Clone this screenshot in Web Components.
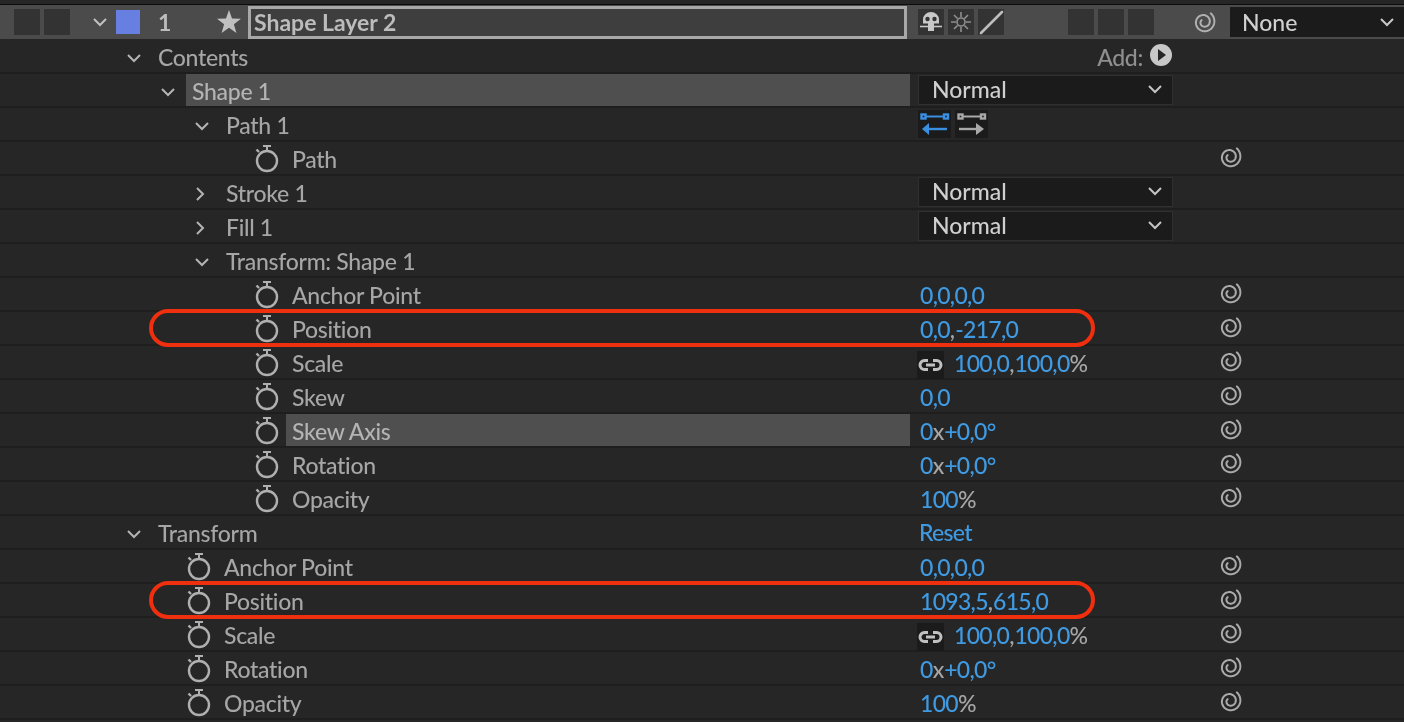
<!DOCTYPE html>
<html>
<head>
<meta charset="utf-8">
<title>Shape Layer 2</title>
<style>
    html, body { margin: 0; height: 722px; overflow: hidden; background: #262626; }
    body { font-family: Lato, "Noto Sans", "Liberation Sans", sans-serif; }
    ae-num { color: #3f9ae2; letter-spacing: -0.7px; }
</style>
</head>
<body>
<ae-timeline>
    <ae-layer-header number="1" name="Shape Layer 2" mode="None"></ae-layer-header>
    <ae-row level="0" icon="twist">Contents
        <ae-add slot="value"></ae-add>
    </ae-row>
    <ae-row level="1" icon="twist" selected>Shape 1
        <ae-select slot="value">Normal</ae-select>
    </ae-row>
    <ae-row level="2" icon="twist">Path 1
        <ae-path-dir slot="value"></ae-path-dir>
    </ae-row>
    <ae-row level="2" icon="watch" spiral>Path</ae-row>
    <ae-row level="2" icon="closed">Stroke 1
        <ae-select slot="value">Normal</ae-select>
    </ae-row>
    <ae-row level="2" icon="closed">Fill 1
        <ae-select slot="value">Normal</ae-select>
    </ae-row>
    <ae-row level="2" icon="twist">Transform: Shape 1</ae-row>
    <ae-row level="2" icon="watch" spiral>Anchor Point
        <span slot="value"><ae-num>0,0,0,0</ae-num></span>
    </ae-row>
    <ae-row level="2" icon="watch" spiral>Position
        <span slot="value"><ae-num>0,0</ae-num>,<ae-num>-217,0</ae-num></span>
    </ae-row>
    <ae-row level="2" icon="watch" spiral>Scale
        <span slot="value"><ae-link></ae-link><ae-num>100,0</ae-num>,<ae-num>100,0</ae-num>%</span>
    </ae-row>
    <ae-row level="2" icon="watch" spiral>Skew
        <span slot="value"><ae-num>0,0</ae-num></span>
    </ae-row>
    <ae-row level="2" icon="watch" spiral selected>Skew Axis
        <span slot="value"><ae-num>0</ae-num>x<ae-num>+0,0°</ae-num></span>
    </ae-row>
    <ae-row level="2" icon="watch" spiral>Rotation
        <span slot="value"><ae-num>0</ae-num>x<ae-num>+0,0°</ae-num></span>
    </ae-row>
    <ae-row level="2" icon="watch" spiral>Opacity
        <span slot="value"><ae-num>100</ae-num>%</span>
    </ae-row>
    <ae-row level="0" icon="twist">Transform
        <span slot="value" style="display:block;margin:-1px 0 0 -1px"><ae-num>Reset</ae-num></span>
    </ae-row>
    <ae-row level="0" icon="watch" spiral>Anchor Point
        <span slot="value"><ae-num>0,0,0,0</ae-num></span>
    </ae-row>
    <ae-row level="0" icon="watch" spiral>Position
        <span slot="value"><ae-num>1093,5</ae-num>,<ae-num>615,0</ae-num></span>
    </ae-row>
    <ae-row level="0" icon="watch" spiral>Scale
        <span slot="value"><ae-link></ae-link><ae-num>100,0</ae-num>,<ae-num>100,0</ae-num>%</span>
    </ae-row>
    <ae-row level="0" icon="watch" spiral>Rotation
        <span slot="value"><ae-num>0</ae-num>x<ae-num>+0,0°</ae-num></span>
    </ae-row>
    <ae-row level="0" icon="watch" spiral>Opacity
        <span slot="value"><ae-num>100</ae-num>%</span>
    </ae-row>
    <ae-oval style="top: 309px"></ae-oval>
    <ae-oval style="top: 581px"></ae-oval>
</ae-timeline>

<script>
const chevron = (color, open = true) => open
    ? `<svg width="16" height="10" viewBox="0 0 16 10"><path d="M2 2l6 6 6-6" fill="none" stroke="${color}" stroke-width="2"/></svg>`
    : `<svg width="10" height="16" viewBox="0 0 10 16" style="margin-left:-5px"><path d="M2 2l6 6-6 6" fill="none" stroke="${color}" stroke-width="2"/></svg>`;

class AeTimeline extends HTMLElement {
    constructor() {
        super();
        this.attachShadow({ mode: 'open' });
        this.shadowRoot.innerHTML = `
            <style>
                :host {
                    display: flex;
                    flex-direction: column;
                    position: relative;
                    width: 1404px;
                    height: 722px;
                    overflow: hidden;
                    background: #262626;
                    color: #a6a6a6;
                    font-size: 23px;
                    font-weight: 500;
                    filter: blur(0.4px);
                }
            </style>
            <slot></slot>
        `;
    }
}

class AeSpiral extends HTMLElement {
    constructor() {
        super();
        this.attachShadow({ mode: 'open' });
        const points = [];
        for (let i = 0; i <= 80; i++) {
            const t = i / 80;
            const angle = -0.9 + t * Math.PI * 3.5;
            const radius = 11 - t * 8;
            points.push(`${(12 + radius * Math.cos(angle)).toFixed(2)},${(12 + radius * Math.sin(angle)).toFixed(2)}`);
        }
        this.shadowRoot.innerHTML = `
            <style>
                :host { display: block; width: 24px; height: 24px; }
                svg { display: block; }
            </style>
            <svg width="24" height="24" viewBox="0 0 24 24">
                <polyline points="${points.join(' ')}" fill="none" stroke="var(--spiral, #ababab)" stroke-width="2" stroke-linecap="round"/>
            </svg>
        `;
    }
}

class AeWatch extends HTMLElement {
    constructor() {
        super();
        this.attachShadow({ mode: 'open' });
        this.shadowRoot.innerHTML = `
            <style>
                :host { display: block; width: 26px; height: 30px; margin: -2px 2px 0 0; }
                svg { display: block; }
            </style>
            <svg width="26" height="30" viewBox="0 0 26 30" fill="none" stroke="#b0b0b0" stroke-width="2.400">
                <circle cx="13" cy="17" r="10"/>
                <path d="M9 2h8M13 2v5" stroke-width="2"/>
                <path d="M2.500 5.500l2.500 2.500"/>
            </svg>
        `;
    }
}

class AeRow extends HTMLElement {
    constructor() {
        super();
        this.attachShadow({ mode: 'open' });
    }

    connectedCallback() {
        const level = parseInt(this.getAttribute('level') || '0', 10);
        const icon = this.getAttribute('icon');
        const left = 116 + level * 34 + (icon === 'watch' ? 66 : 0);
        let glyph = '<ae-watch></ae-watch>';
        if (icon === 'twist') glyph = chevron('#b4b4b4');
        if (icon === 'closed') glyph = chevron('#b4b4b4', false);
        this.shadowRoot.innerHTML = `
            <style>
                :host {
                    display: flex;
                    flex: none;
                    height: 32px;
                    border-bottom: 2px solid #1e1e1e;
                }
                .name {
                    flex: 0 0 910px;
                    box-sizing: border-box;
                    display: flex;
                    padding-left: ${left}px;
                }
                .icon {
                    flex: 0 0 36px;
                    display: flex;
                    align-items: center;
                    justify-content: center;
                    padding-top: 3px;
                    box-sizing: border-box;
                }
                .label {
                    flex: 1;
                    padding: 1px 0 0 6px;
                    line-height: 32px;
                    letter-spacing: -0.3px;
                    white-space: nowrap;
                }
                :host([selected]) .label { background: #4f4f4f; color: #b4b4b4; }
                .value {
                    flex: 0 0 297px;
                    box-sizing: border-box;
                    padding: 2px 0 0 10px;
                    line-height: 30px;
                    white-space: nowrap;
                }
                .spiral { flex: 0 0 46px; display: flex; align-items: center; justify-content: center; padding-bottom: 3px; }
                ::slotted(ae-select), ::slotted(ae-path-dir) { margin-left: -2px; }
            </style>
            <div class="name">
                <div class="icon">${glyph}</div>
                <div class="label"><slot></slot></div>
            </div>
            <div class="value"><slot name="value"></slot></div>
            <div class="spiral">${this.hasAttribute('spiral') ? '<ae-spiral></ae-spiral>' : ''}</div>
        `;
    }
}

class AeSelect extends HTMLElement {
    constructor() {
        super();
        this.attachShadow({ mode: 'open' });
        this.shadowRoot.innerHTML = `
            <style>
                :host {
                    display: flex;
                    align-items: center;
                    justify-content: space-between;
                    box-sizing: border-box;
                    width: 255px;
                    height: 30px;
                    margin-top: -1px;
                    padding: 0 9px 2px 13px;
                    background: #1b1b1b;
                    border: 1px solid #303030;
                    color: #cfcfcf;
                    line-height: 26px;
                }
            </style>
            <slot></slot>
            ${chevron('#c4c4c4')}
        `;
    }
}

class AeAdd extends HTMLElement {
    constructor() {
        super();
        this.attachShadow({ mode: 'open' });
        this.shadowRoot.innerHTML = `
            <style>
                :host {
                    display: flex;
                    justify-content: flex-end;
                    align-items: center;
                    gap: 7px;
                    width: 252px;
                    color: #8f8f8f;
                    letter-spacing: -0.3px;
                }
                svg { display: block; margin-top: -4px; }
            </style>
            <span>Add:</span>
            <svg width="22" height="22" viewBox="0 0 22 22">
                <circle cx="11" cy="11" r="11" fill="#c8c8c8"/>
                <path d="M8 5l8 6-8 6z" fill="#262626"/>
            </svg>
        `;
    }
}

class AePathDir extends HTMLElement {
    constructor() {
        super();
        this.attachShadow({ mode: 'open' });
        const button = (color, dir) => `
            <svg width="33" height="28" viewBox="0 0 33 28" style="background:#1b1b1b">
                <g fill="none" stroke="${color}">
                    <rect x="3.500" y="4.500" width="4" height="4" stroke-width="2.400"/>
                    <rect x="26" y="4.500" width="4" height="4" stroke-width="2.400"/>
                    <path d="M7.500 6.500H26" stroke-width="2"/>
                    <path d="${dir === 'left' ? 'M10 19h19' : 'M4 19h18'}" stroke-width="2.400"/>
                </g>
                <path d="${dir === 'left' ? 'M4 19l7-6v12z' : 'M29 19l-8-6v12z'}" fill="${color}"/>
            </svg>`;
        this.shadowRoot.innerHTML = `
            <style>
                :host { display: flex; gap: 4px; }
                svg { display: block; }
            </style>
            ${button('#3a8fe0', 'left')}
            ${button('#a8a8a8', 'right')}
        `;
    }
}

class AeLink extends HTMLElement {
    constructor() {
        super();
        this.attachShadow({ mode: 'open' });
        this.shadowRoot.innerHTML = `
            <style>
                :host {
                    display: inline-flex;
                    align-items: center;
                    justify-content: center;
                    width: 27px;
                    height: 28px;
                    margin: -2px 10px 0 -3px;
                    background: #1b1b1b;
                    vertical-align: middle;
                }
            </style>
            <svg width="25" height="14" viewBox="0 0 25 14" fill="none" stroke="#c0c0c0" stroke-width="3">
                <path d="M10 2.500H6.500a4.500 4.500 0 0 0 0 9H10M15 2.500h3.500a4.500 4.500 0 0 1 0 9H15M8 7h9"/>
            </svg>
        `;
    }
}

class AeOval extends HTMLElement {
    constructor() {
        super();
        this.attachShadow({ mode: 'open' });
        this.shadowRoot.innerHTML = `
            <style>
                :host {
                    position: absolute;
                    left: 149px;
                    width: 946px;
                    height: 38px;
                    box-sizing: border-box;
                    border: 4px solid #ef2f0e;
                    border-radius: 19px;
                }
            </style>
        `;
    }
}

class AeLayerHeader extends HTMLElement {
    constructor() {
        super();
        this.attachShadow({ mode: 'open' });
    }

    connectedCallback() {
        const box = '<div class="box"></div>';
        this.shadowRoot.innerHTML = `
            <style>
                :host {
                    display: flex;
                    flex: none;
                    align-items: center;
                    box-sizing: border-box;
                    height: 35px;
                    margin-top: 4px;
                    margin-bottom: 1px;
                    padding-left: 14px;
                    border-top: 1px solid #0c0c0c;
                    background: #4b4b4b;
                    color: #bcbcbc;
                }
                .box {
                    flex: none;
                    box-sizing: border-box;
                    width: 26px;
                    height: 26px;
                    margin-right: 4px;
                    background: #333;
                    display: flex;
                    align-items: center;
                    justify-content: center;
                }
                .twist { margin-left: 18px; width: 16px; margin-right: 8px; }
                .twist svg { display: block; }
                .swatch { width: 24px; height: 24px; background: #687fe2; }
                .num { width: 84px; padding-left: 18px; box-sizing: border-box; font-weight: 700; }
                .star { width: 24px; height: 24px; margin-left: -7px; margin-right: 7px; }
                .name {
                    flex: none;
                    box-sizing: border-box;
                    width: 659px;
                    height: 33px;
                    padding-left: 3px;
                    border: 3px solid #a8a8a8;
                    background: #3e3e3e;
                    font-weight: 700;
                    line-height: 27px;
                    white-space: nowrap;
                }
                .switches { display: flex; margin-left: 11px; width: 150px; }
                .mode {
                    flex: 1;
                    box-sizing: border-box;
                    height: 30px;
                    margin-left: 14px;
                    padding: 0 9px 0 12px;
                    display: flex;
                    align-items: center;
                    justify-content: space-between;
                    background: #1b1b1b;
                    color: #d0d0d0;
                }
                ae-spiral { margin-left: 34px; --spiral: #b0b0b0; }
            </style>
            ${box}${box}
            <div class="twist">${chevron('#c0c0c0')}</div>
            <div class="swatch"></div>
            <div class="num">${this.getAttribute('number')}</div>
            <svg class="star" viewBox="0 0 24 24"><path d="M12 0l3 8.400 9 .3-7.100 5.500 2.500 8.700L12 17.800l-7.400 5.100 2.500-8.700L0 8.700l9-.3z" fill="#c0c0c0"/></svg>
            <div class="name">${this.getAttribute('name')}</div>
            <div class="switches">
                <div class="box">
                    <svg width="26" height="26" viewBox="0 0 26 26" fill="none">
                        <path d="M5 14.500v-4a8 7.500 0 0 1 16 0v4h-5v7.500h-6v-7.500z" fill="#c8c8c8"/>
                        <circle cx="9.500" cy="10" r="2.200" fill="#333"/><circle cx="16.500" cy="10" r="2.200" fill="#333"/>
                        <path d="M2 17.500h22" stroke="#c8c8c8" stroke-width="1.600"/>
                    </svg>
                </div>
                <div class="box">
                    <svg width="26" height="26" viewBox="0 0 26 26" fill="none" stroke="#8f8f8f" stroke-width="1.600">
                        <circle cx="13" cy="13" r="4"/>
                        <path d="M13 3v5M13 18v5M3 13h5M18 13h5M6 6l3.500 3.500M16.500 16.500L20 20M20 6l-3.500 3.500M9.500 16.500L6 20"/>
                    </svg>
                </div>
                <div class="box">
                    <svg width="26" height="26" viewBox="0 0 26 26" fill="none" stroke="#bdbdbd" stroke-width="2.600" stroke-linecap="round">
                        <path d="M3 24L24 3"/>
                    </svg>
                </div>
            </div>
            <div style="display:flex">${box}${box}${box}</div>
            <ae-spiral></ae-spiral>
            <div class="mode"><span>${this.getAttribute('mode')}</span>${chevron('#c8c8c8')}</div>
        `;
    }
}

customElements.define('ae-timeline', AeTimeline);
customElements.define('ae-spiral', AeSpiral);
customElements.define('ae-watch', AeWatch);
customElements.define('ae-row', AeRow);
customElements.define('ae-select', AeSelect);
customElements.define('ae-add', AeAdd);
customElements.define('ae-path-dir', AePathDir);
customElements.define('ae-link', AeLink);
customElements.define('ae-oval', AeOval);
customElements.define('ae-layer-header', AeLayerHeader);
</script>
</body>
</html>
